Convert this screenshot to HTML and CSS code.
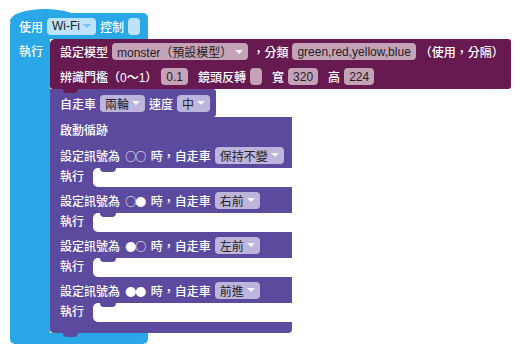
FILE: index.html
```html
<!DOCTYPE html>
<html lang="zh-TW">
<head>
    <meta charset="UTF-8">
    <title>自走車循跡</title>
    <link rel="stylesheet" href="styles.css">
</head>
<body>
    <div class="ws">
        <div class="wifi">
            <div class="wifi-top">
                <span>使用</span>
                <span class="fld fld-blue">Wi‑Fi<i class="arr"></i></span>
                <span>控制</span>
                <span class="chk chk-blue"></span>
            </div>
            <div class="wifi-body">
                <div class="wifi-side">執行</div>
                <div class="stack">
                    <!-- 模型設定 -->
                    <div class="model">
                        <div class="row">
                            <span>設定模型</span>
                            <span class="fld fld-red">monster（預設模型）<i class="arr"></i></span>
                            <span>，分類</span>
                            <span class="fld fld-red">green,red,yellow,blue</span>
                            <span>（使用，分隔）</span>
                        </div>
                        <div class="row">
                            <span>辨識門檻（0～1）</span>
                            <span class="fld fld-red">0.1</span>
                            <span class="sp">鏡頭反轉</span>
                            <span class="chk chk-red"></span>
                            <span class="sp">寬</span>
                            <span class="fld fld-red">320</span>
                            <span class="sp">高</span>
                            <span class="fld fld-red">224</span>
                        </div>
                    </div>

                    <div class="car">
                        <div class="row">
                            <span>自走車</span>
                            <span class="fld fld-pur">兩輪<i class="arr"></i></span>
                            <span>速度</span>
                            <span class="fld fld-pur">中<i class="arr"></i></span>
                        </div>
                    </div>

                    <!-- 循跡 -->
                    <div class="loop">
                        <div class="row head">啟動循跡</div>

                        <div class="row case">
                            <span>設定訊號為 <b class="sig">○○</b> 時，自走車</span>
                            <span class="fld fld-pur">保持不變<i class="arr"></i></span>
                        </div>
                        <div class="slot"><div class="slot-lbl">執行</div><div class="hole"></div></div>

                        <div class="row case">
                            <span>設定訊號為 <b class="sig">○●</b> 時，自走車</span>
                            <span class="fld fld-pur">右前<i class="arr"></i></span>
                        </div>
                        <div class="slot"><div class="slot-lbl">執行</div><div class="hole"></div></div>

                        <div class="row case">
                            <span>設定訊號為 <b class="sig">●○</b> 時，自走車</span>
                            <span class="fld fld-pur">左前<i class="arr"></i></span>
                        </div>
                        <div class="slot"><div class="slot-lbl">執行</div><div class="hole"></div></div>

                        <div class="row case">
                            <span>設定訊號為 <b class="sig">●●</b> 時，自走車</span>
                            <span class="fld fld-pur">前進<i class="arr"></i></span>
                        </div>
                        <div class="slot"><div class="slot-lbl">執行</div><div class="hole"></div></div>

                        <div class="loop-foot"></div>
                    </div>
                </div>
            </div>
            <div class="wifi-foot"></div>
        </div>
    </div>
</body>
</html>
```

FILE: styles.css
```css
* {
    margin: 0;
    padding: 0;
    box-sizing: border-box;
}

body {
    font-family: 'Liberation Sans', 'Noto Sans CJK TC', sans-serif;
    font-size: 12px;
    font-weight: 500;
    color: white;
    background: white;
}

.ws {
    padding: 13px 0 0 10px;
}

.wifi {
    display: flex;
    flex-direction: column;
    align-items: flex-start;
}

.wifi-top {
    position: relative;
    z-index: 0;
    width: 138px;
    height: 26px;
    display: flex;
    align-items: center;
    gap: 4px;
    padding-left: 9px;
    background: #29a7e7;
    border-radius: 40px 5px 0 0 / 12px 5px 0 0;
}

/* hat bump */
.wifi-top::before {
    content: '';
    position: absolute;
    z-index: -1;
    left: 0;
    top: -4px;
    width: 70px;
    height: 24px;
    border-radius: 50%;
    background: #29a7e7;
}

.wifi-body {
    display: flex;
}

.wifi-side {
    width: 40px;
    background: #29a7e7;
    padding-left: 9px;
    line-height: 26px;
}

.wifi-foot {
    width: 138px;
    height: 11px;
    background: #29a7e7;
    border-radius: 0 0 5px 5px;
}

.stack {
    display: flex;
    flex-direction: column;
    align-items: flex-start;
}

.row {
    display: flex;
    align-items: center;
    gap: 4px;
    padding-left: 10px;
    white-space: nowrap;
}

.sp {
    margin-left: 6px;
}

.sig {
    font-family: 'Noto Sans CJK TC', sans-serif;
    font-weight: 500;
    font-size: 11px;
    letter-spacing: -1px;
    margin: 0 2px;
}

.model {
    position: relative;
    z-index: 2;
    width: 461px;
    background: #671a4f;
    border-radius: 5px 3px 3px 3px;
}

.model .row {
    height: 25px;
}

.model::after {
    content: '';
    position: absolute;
    left: 13px;
    bottom: -4px;
    width: 15px;
    height: 4px;
    background: #671a4f;
    border-radius: 0 0 5px 5px;
}

.car {
    position: relative;
    z-index: 1;
    width: 166px;
    height: 28px;
    background: #5c4a9e;
    border-radius: 0 3px 3px 0;
}

.car .row {
    height: 28px;
}

.car::after {
    content: '';
    position: absolute;
    left: 13px;
    bottom: -4px;
    width: 15px;
    height: 4px;
    background: #52428f;
    border-radius: 0 0 5px 5px;
}

.loop {
    position: relative;
    z-index: 2;
    width: 242px;
    display: flex;
    flex-direction: column;
}

.loop .row {
    background: #5c4a9e;
    height: 26px;
}

.loop .head {
    height: 25px;
}

.slot {
    display: flex;
    height: 19px;
    background: linear-gradient(90deg, #5c4a9e 0 50px, transparent 50px);
}

.slot-lbl {
    width: 43px;
    padding-left: 10px;
    line-height: 19px;
    background: #5c4a9e;
}

.hole {
    position: relative;
    flex: 1;
    background: white;
    border-radius: 5px 0 0 5px;
}

.hole::before {
    content: '';
    position: absolute;
    left: 7px;
    top: 0;
    width: 16px;
    height: 4px;
    background: #5c4a9e;
    border-radius: 0 0 6px 6px;
}

.loop-foot {
    height: 11px;
    background: #5c4a9e;
    border-radius: 0 0 4px 4px;
}

.loop::after {
    content: '';
    position: absolute;
    left: 13px;
    bottom: -4px;
    width: 15px;
    height: 4px;
    background: #5c4a9e;
    border-radius: 0 0 5px 5px;
}

/* fields */
.fld {
    display: inline-flex;
    align-items: center;
    height: 17px;
    padding: 0 5px;
    border-radius: 4px;
    color: #222;
    font-weight: 400;
}

.fld-blue { background: #bde3f8; }
.fld-red { background: #c4a3b8; }
.fld-pur { background: #bdb5dc; }

.arr {
    display: inline-block;
    margin-left: 3px;
    border-left: 4px solid transparent;
    border-right: 4px solid transparent;
    border-top: 4px solid rgba(255, 255, 255, 0.85);
}

.fld-blue .arr {
    border-top-color: #6fc2ee;
}

.chk {
    display: inline-block;
    width: 12px;
    height: 17px;
    border-radius: 4px;
}

.chk-blue { background: #bde3f8; }
.chk-red { background: #c4a3b8; }
```
